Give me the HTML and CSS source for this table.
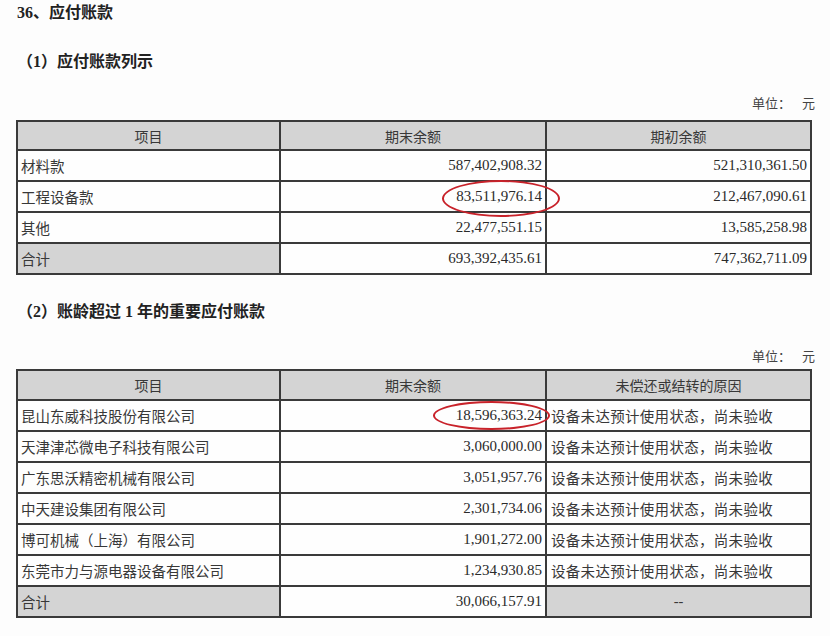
FILE: index.html
```html
<!DOCTYPE html>
<html lang="zh-CN">
<head>
<meta charset="utf-8">
<title>应付账款</title>
<link rel="stylesheet" href="styles.css">
</head>
<body>
<div class="page">
  <div class="title">36、应付账款</div>
  <div class="subtitle">（1）应付账款列示</div>
  <div class="unit unit1">单位： <span class="unit-val">元</span></div>
  <table class="sheet sheet1">
    <colgroup><col class="c1"><col class="c2"><col class="c3"></colgroup>
    <tr class="head"><td>项目</td><td>期末余额</td><td>期初余额</td></tr>
    <tr><td class="name">材料款</td><td class="num">587,402,908.32</td><td class="num">521,310,361.50</td></tr>
    <tr><td class="name">工程设备款</td><td class="num">83,511,976.14</td><td class="num">212,467,090.61</td></tr>
    <tr><td class="name">其他</td><td class="num">22,477,551.15</td><td class="num">13,585,258.98</td></tr>
    <tr><td class="name gray">合计</td><td class="num">693,392,435.61</td><td class="num">747,362,711.09</td></tr>
  </table>

  <div class="subtitle second">（2）账龄超过 1 年的重要应付账款</div>
  <div class="unit unit2">单位： <span class="unit-val">元</span></div>
  <table class="sheet sheet2">
    <colgroup><col class="c1"><col class="c2"><col class="c3"></colgroup>
    <tr class="head"><td>项目</td><td>期末余额</td><td>未偿还或结转的原因</td></tr>
    <tr><td class="name">昆山东威科技股份有限公司</td><td class="num">18,596,363.24</td><td class="reason">设备未达预计使用状态，尚未验收</td></tr>
    <tr><td class="name">天津津芯微电子科技有限公司</td><td class="num">3,060,000.00</td><td class="reason">设备未达预计使用状态，尚未验收</td></tr>
    <tr><td class="name">广东思沃精密机械有限公司</td><td class="num">3,051,957.76</td><td class="reason">设备未达预计使用状态，尚未验收</td></tr>
    <tr><td class="name">中天建设集团有限公司</td><td class="num">2,301,734.06</td><td class="reason">设备未达预计使用状态，尚未验收</td></tr>
    <tr><td class="name">博可机械（上海）有限公司</td><td class="num">1,901,272.00</td><td class="reason">设备未达预计使用状态，尚未验收</td></tr>
    <tr><td class="name">东莞市力与源电器设备有限公司</td><td class="num">1,234,930.85</td><td class="reason">设备未达预计使用状态，尚未验收</td></tr>
    <tr><td class="name gray">合计</td><td class="num">30,066,157.91</td><td class="dash gray">--</td></tr>
  </table>

  <div class="mark mark1"></div>
  <div class="mark mark2"></div>
</div>
</body>
</html>
```

FILE: styles.css
```css
html, body {
  margin: 0;
  padding: 0;
  background: #fdfdfd;
}
.page {
  position: relative;
  width: 830px;
  height: 636px;
  overflow: hidden;
  color: #2e2e2e;
  font-family: "Liberation Serif", "Noto Sans CJK SC", serif;
}
.title {
  height: 26px;
  line-height: 26px;
  padding-left: 17px;
  font-size: 16px;
  font-weight: bold;
  color: #222;
}
.subtitle {
  margin-top: 24px;
  height: 24px;
  line-height: 24px;
  padding-left: 17px;
  font-size: 16px;
  font-weight: bold;
  color: #222;
}
.subtitle.second {
  margin-top: 25px;
}
.unit {
  height: 20px;
  line-height: 20px;
  text-align: right;
  padding-right: 15px;
  font-size: 13px;
  color: #444;
  font-family: "Noto Sans CJK SC", sans-serif;
}
.unit1 {
  margin-top: 19px;
  margin-bottom: 7px;
}
.unit2 {
  margin-top: 22px;
  margin-bottom: 3px;
}
.unit-val {
  margin-left: 8px;
}
.sheet {
  margin: 0 0 0 16px;
  width: 794px;
  table-layout: fixed;
  border-collapse: collapse;
  border: 2px solid #3a3a3a;
}
.sheet col.c1 { width: 263px; }
.sheet col.c2 { width: 266px; }
.sheet col.c3 { width: 265px; }
.sheet td {
  border: 2px solid #3a3a3a;
  padding: 0 3px;
  font-size: 14.5px;
  white-space: nowrap;
  overflow: hidden;
  background: #fefefe;
  font-family: "Noto Sans CJK SC", sans-serif;
  color: #383838;
}
.sheet1 td { height: 29px; }
.sheet1 tr.head td { height: 27px; }
.sheet2 td { height: 29px; }
.sheet2 tr.head td { height: 28px; }
.sheet tr.head td {
  background: #d4d4d4;
  text-align: center;
  font-size: 14px;
}
.sheet td.name {
  padding-left: 3px;
}
.sheet td.num {
  text-align: right;
  font-family: "Liberation Serif", serif;
  font-size: 15px;
  padding-right: 3px;
  color: #2a2a2a;
}
.sheet td.reason {
  padding-left: 4px;
  letter-spacing: 0.3px;
}
.sheet td.gray {
  background: #d4d4d4;
}
.sheet td.dash {
  text-align: center;
  font-family: "Liberation Serif", serif;
}
.mark {
  position: absolute;
  border: 2px solid #c8222a;
  border-radius: 50%;
  box-sizing: border-box;
}
.mark1 {
  left: 442px;
  top: 180px;
  width: 118px;
  height: 37px;
}
.mark2 {
  left: 433px;
  top: 401px;
  width: 117px;
  height: 29px;
}
```
